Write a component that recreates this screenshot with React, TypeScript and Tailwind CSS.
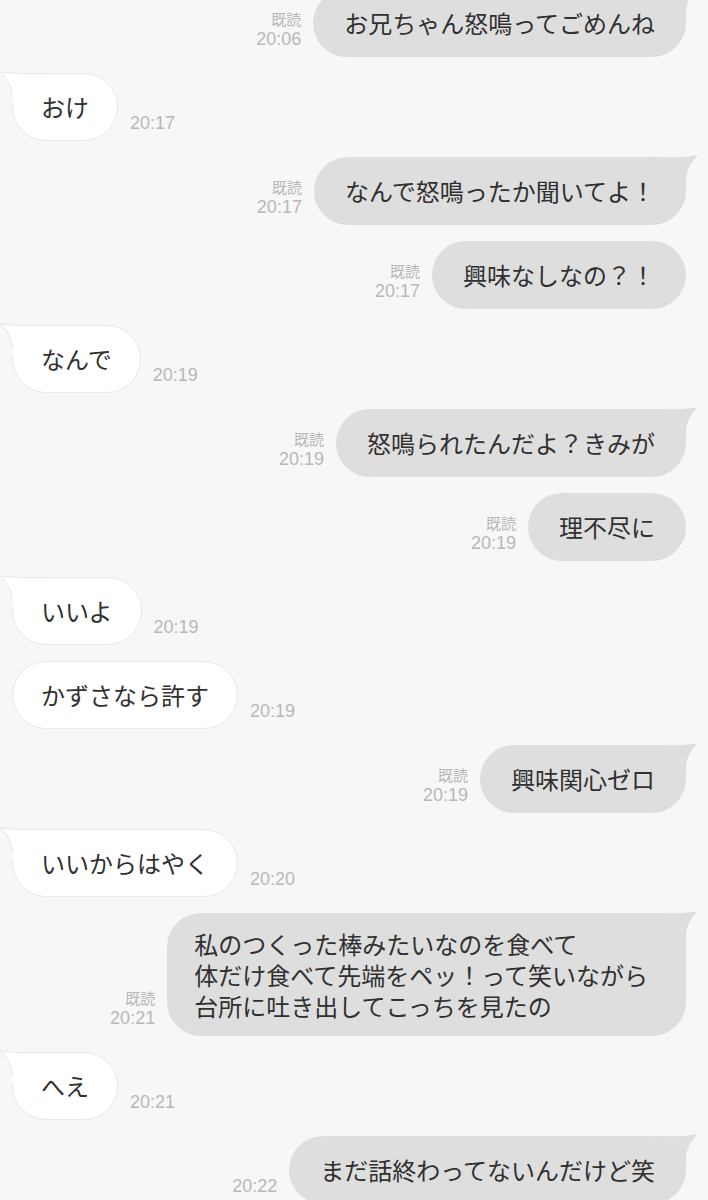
import React from 'react';

type Msg = {
  side: 'l' | 'r';
  lines: string[];
  time: string;
  read?: boolean;
  tail?: boolean;
};

const messages: Msg[] = [
  { side: 'r', lines: ['お兄ちゃん怒鳴ってごめんね'], time: '20:06', read: true, tail: true },
  { side: 'l', lines: ['おけ'], time: '20:17', tail: true },
  { side: 'r', lines: ['なんで怒鳴ったか聞いてよ！'], time: '20:17', read: true, tail: true },
  { side: 'r', lines: ['興味なしなの？！'], time: '20:17', read: true },
  { side: 'l', lines: ['なんで'], time: '20:19', tail: true },
  { side: 'r', lines: ['怒鳴られたんだよ？きみが'], time: '20:19', read: true, tail: true },
  { side: 'r', lines: ['理不尽に'], time: '20:19', read: true },
  { side: 'l', lines: ['いいよ'], time: '20:19', tail: true },
  { side: 'l', lines: ['かずさなら許す'], time: '20:19' },
  { side: 'r', lines: ['興味関心ゼロ'], time: '20:19', read: true, tail: true },
  { side: 'l', lines: ['いいからはやく'], time: '20:20', tail: true },
  {
    side: 'r',
    lines: ['私のつくった棒みたいなのを食べて', '体だけ食べて先端をペッ！って笑いながら', '台所に吐き出してこっちを見たの'],
    time: '20:21',
    read: true,
    tail: true,
  },
  { side: 'l', lines: ['へえ'], time: '20:21', tail: true },
  { side: 'r', lines: ['まだ話終わってないんだけど笑'], time: '20:22', tail: true },
];

const jp = { fontFamily: '"Noto Sans CJK JP", "Noto Sans", sans-serif' };

// little curled tail on the first bubble of a group
function Tail({ side }: { side: 'l' | 'r' }) {
  if (side === 'r') {
    return (
      <svg className="absolute -right-[12px] -top-[2px]" width="44" height="32" viewBox="0 0 44 32">
        <path d="M0 2 C14 2 32 3 44 0 C38 6 32 14 32 26 L32 32 L0 32 Z" fill="#dedede" />
      </svg>
    );
  }
  return (
    <svg className="absolute -left-[13px] -top-[3px]" width="44" height="32" viewBox="0 0 44 32">
      <path d="M44 2 C30 2 12 3 0 0 C6 6 12 14 12 26 L12 32 L44 32 Z" fill="#ffffff" />
      <path d="M44 2.5 C30 2.5 12 3 0.5 0.5 C6 6 11.5 14 12.5 26" fill="none" stroke="#e6e6e6" strokeWidth="1" />
    </svg>
  );
}

function Stamp({ msg }: { msg: Msg }) {
  return (
    <div className={`flex flex-col mb-2 shrink-0 ${msg.side === 'r' ? 'items-end' : 'items-start'}`}>
      {msg.read && (
        <span className="text-[15px] leading-[20px] text-[#b8b8b8]" style={jp}>
          既読
        </span>
      )}
      <span className="text-[18px] leading-[20px] text-[#b8b8b8] font-['Liberation_Sans',sans-serif]">{msg.time}</span>
    </div>
  );
}

function Bubble({ msg }: { msg: Msg }) {
  const multi = msg.lines.length > 1;
  const shape =
    msg.side === 'r'
      ? `bg-[#dedede] ${multi ? 'pl-[27px] pr-[38px] py-[15px]' : 'px-[31px] py-[18px]'}`
      : 'bg-white border border-[#e8e8e8] px-[28px] py-[17px]';
  return (
    <div
      className={`relative rounded-[34px] text-[24px] text-[#303030] whitespace-nowrap ${shape} ${
        multi ? 'leading-[31px]' : 'leading-[32px]'
      }`}
      style={jp}
    >
      {msg.tail && <Tail side={msg.side} />}
      <div className="relative">
        {msg.lines.map((l, i) => (
          <div key={i}>{l}</div>
        ))}
      </div>
    </div>
  );
}

export default function App() {
  return (
    <div className="h-[1200px] w-[708px] overflow-hidden bg-[#f7f7f7]">
      <div className="flex flex-col gap-4 pl-3 pr-[22px] -mt-[11px]">
        {messages.map((m, i) => (
          <div key={i} className={`flex items-end gap-3 ${m.side === 'r' ? 'justify-end' : 'justify-start'}`}>
            {m.side === 'r' && <Stamp msg={m} />}
            <Bubble msg={m} />
            {m.side === 'l' && <Stamp msg={m} />}
          </div>
        ))}
      </div>
    </div>
  );
}
